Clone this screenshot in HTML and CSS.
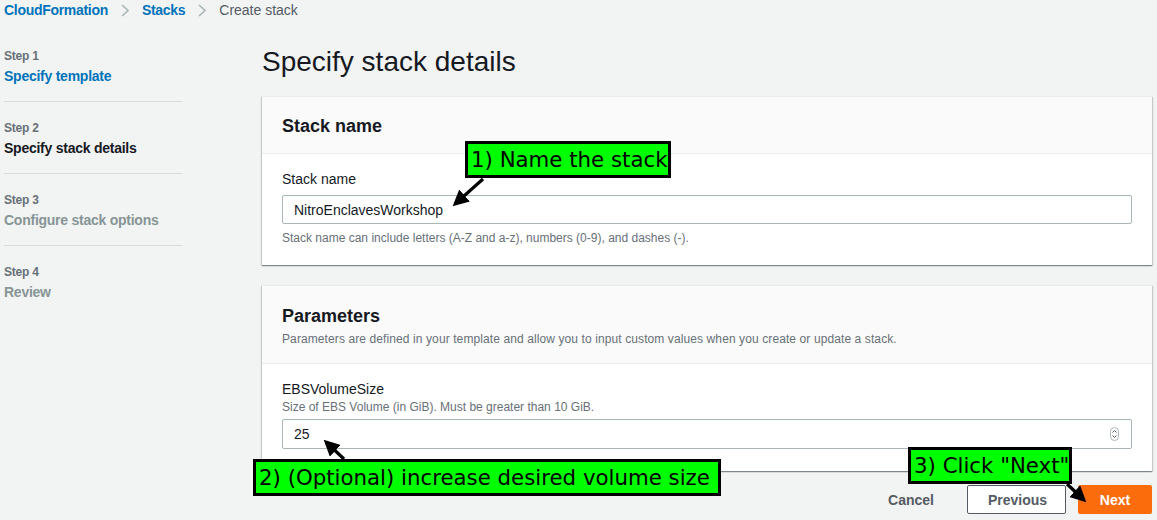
FILE: index.html
```html
<!DOCTYPE html>
<html lang="en">
<head>
<meta charset="utf-8">
<title>Create stack</title>
<link rel="stylesheet" href="styles.css">
</head>
<body>
<nav class="breadcrumb">
  <a class="crumb-link">CloudFormation</a>
  <svg class="crumb-sep" width="8" height="13" viewBox="0 0 8 13"><polyline points="1,1 7,6.5 1,12" fill="none" stroke="#aab7b8" stroke-width="1.6"/></svg>
  <a class="crumb-link">Stacks</a>
  <svg class="crumb-sep" width="8" height="13" viewBox="0 0 8 13"><polyline points="1,1 7,6.5 1,12" fill="none" stroke="#aab7b8" stroke-width="1.6"/></svg>
  <span class="crumb-current">Create stack</span>
</nav>

<div class="layout">
  <aside class="steps">
    <div class="step">
      <div class="step-num">Step 1</div>
      <a class="step-title step-link">Specify template</a>
    </div>
    <div class="step">
      <div class="step-num">Step 2</div>
      <div class="step-title step-active">Specify stack details</div>
    </div>
    <div class="step">
      <div class="step-num">Step 3</div>
      <div class="step-title step-disabled">Configure stack options</div>
    </div>
    <div class="step step-last">
      <div class="step-num">Step 4</div>
      <div class="step-title step-disabled">Review</div>
    </div>
  </aside>

  <main class="content">
    <h1 class="page-title">Specify stack details</h1>

    <section class="card">
      <header class="card-header">
        <h2 class="card-title">Stack name</h2>
      </header>
      <div class="card-body card-body-1">
        <label class="field-label">Stack name</label>
        <div class="input input-1">NitroEnclavesWorkshop</div>
        <div class="hint">Stack name can include letters (A-Z and a-z), numbers (0-9), and dashes (-).</div>
      </div>
    </section>

    <section class="card card-2">
      <header class="card-header card-header-2">
        <h2 class="card-title">Parameters</h2>
        <div class="card-desc">Parameters are defined in your template and allow you to input custom values when you create or update a stack.</div>
      </header>
      <div class="card-body card-body-2">
        <label class="field-label">EBSVolumeSize</label>
        <div class="field-desc">Size of EBS Volume (in GiB). Must be greater than 10 GiB.</div>
        <div class="input input-2">
          <span>25</span>
          <svg class="spinner" width="9" height="14" viewBox="0 0 9 14">
            <rect x="0.5" y="0.5" width="8" height="13" rx="4" fill="#fff" stroke="#aab7b8"/>
            <polyline points="2.5,5.5 4.5,3.5 6.5,5.5" fill="none" stroke="#545b64" stroke-width="1"/>
            <polyline points="2.5,8.5 4.5,10.5 6.5,8.5" fill="none" stroke="#545b64" stroke-width="1"/>
          </svg>
        </div>
      </div>
    </section>

    <div class="actions">
      <button class="btn btn-link">Cancel</button>
      <button class="btn btn-normal">Previous</button>
      <button class="btn btn-primary">Next</button>
    </div>
  </main>
</div>

<div class="callout callout-1">1) Name the stack</div>
<div class="callout callout-2">2) (Optional) increase desired volume size</div>
<div class="callout callout-3">3) Click "Next"</div>

<svg class="arrows" width="1157" height="520" viewBox="0 0 1157 520">
  <defs>
    <marker id="head" markerWidth="5" markerHeight="5" refX="4" refY="2.5" orient="auto" markerUnits="strokeWidth">
      <polygon points="0,0 5,2.5 0,5" fill="#000"/>
    </marker>
  </defs>
  <line x1="483" y1="179" x2="455" y2="204" stroke="#000" stroke-width="3.2" marker-end="url(#head)"/>
  <line x1="344" y1="459" x2="326" y2="442" stroke="#000" stroke-width="3.2" marker-end="url(#head)"/>
  <line x1="1067" y1="484" x2="1084" y2="500" stroke="#000" stroke-width="3.2" marker-end="url(#head)"/>
</svg>
</body>
</html>
```

FILE: styles.css
```css
* {
  box-sizing: border-box;
}

html, body {
  margin: 0;
  padding: 0;
}

body {
  width: 1157px;
  height: 520px;
  overflow: hidden;
  position: relative;
  background: #f2f3f3;
  font-family: "Liberation Sans", Arial, sans-serif;
  color: #16191f;
}

/* Breadcrumb */
.breadcrumb {
  display: flex;
  align-items: center;
  height: 20px;
  padding-left: 4px;
  font-size: 14px;
  line-height: 20px;
}

.crumb-link {
  color: #0073bb;
  font-weight: 700;
  letter-spacing: -0.3px;
}

.crumb-sep {
  margin: 0 13px 0 13px;
}

.crumb-current {
  color: #545b64;
}

/* Layout */
.layout {
  display: grid;
  grid-template-columns: 178px 1fr;
  column-gap: 80px;
  padding: 10px 5px 0 4px;
}

/* Side steps */
.step {
  padding: 18px 0 15px;
  border-bottom: 1px solid #d5dbdb;
}

.step-last {
  border-bottom: none;
}

.step-num {
  font-size: 12px;
  line-height: 16px;
  color: #687078;
  font-weight: 700;
  letter-spacing: -0.2px;
}

.step-title {
  display: block;
  margin-top: 2px;
  font-size: 14px;
  line-height: 20px;
  font-weight: 700;
  letter-spacing: -0.25px;
}

.step-link {
  color: #0073bb;
}

.step-active {
  color: #16191f;
}

.step-disabled {
  color: #879596;
}

/* Content */
.page-title {
  margin: 14px 0 16px;
  font-size: 28px;
  line-height: 36px;
  font-weight: 400;
  color: #16191f;
}

.card {
  background: #fff;
  border-top: 1px solid #eaeded;
  box-shadow: 0 1px 1px 0 rgba(0, 28, 36, 0.3), 1px 1px 1px 0 rgba(0, 28, 36, 0.15), -1px 1px 1px 0 rgba(0, 28, 36, 0.15);
}

.card-2 {
  margin-top: 20px;
}

.card-header {
  background: #fafafa;
  border-bottom: 1px solid #eaeded;
  padding: 18px 20px 16px;
}

.card-header-2 {
  padding: 19px 20px 16px;
}

.card-title {
  margin: 0;
  font-size: 18px;
  line-height: 22px;
  font-weight: 700;
  color: #16191f;
}

.card-desc {
  margin-top: 4px;
  font-size: 12px;
  line-height: 16px;
  color: #687078;
  letter-spacing: 0.1px;
}

.card-body {
  padding: 15px 20px 19px;
}

.card-body-2 {
  padding: 15px 20px 22px;
}

.field-label {
  display: block;
  font-size: 14px;
  line-height: 20px;
  color: #16191f;
}

.field-desc {
  font-size: 12px;
  line-height: 16px;
  color: #687078;
}

.input {
  display: flex;
  align-items: center;
  justify-content: space-between;
  border: 1px solid #aab7b8;
  border-radius: 2px;
  background: #fff;
  padding: 0 11px;
  font-size: 14px;
  color: #16191f;
}

.input-1 {
  height: 29px;
  margin-top: 6px;
}

.input-2 {
  height: 30px;
  margin-top: 4px;
  padding-right: 12px;
}

.hint {
  margin-top: 6px;
  font-size: 12px;
  line-height: 16px;
  color: #687078;
}

/* Actions */
.actions {
  display: flex;
  justify-content: flex-end;
  gap: 12px;
  margin-top: 14px;
}

.btn {
  height: 29px;
  font-family: "Liberation Sans", Arial, sans-serif;
  font-size: 14px;
  font-weight: 700;
  border-radius: 2px;
  padding: 0 20px;
  cursor: pointer;
}

.btn-link {
  background: transparent;
  border: 1px solid transparent;
  color: #545b64;
}

.btn-normal {
  width: 99px;
  background: #fff;
  border: 1px solid #545b64;
  color: #545b64;
}

.btn-primary {
  width: 74px;
  background: #fb6d0c;
  border: 1px solid #fb6d0c;
  color: #fff;
}

/* Annotation overlays */
.callout {
  position: absolute;
  height: 37px;
  border: 3px solid #000;
  background: #00ff00;
  font-family: "DejaVu Sans", sans-serif;
  font-size: 21.3px;
  line-height: 31px;
  color: #000;
  padding: 0 3px;
  white-space: nowrap;
}

.callout-1 {
  left: 465px;
  top: 141px;
  width: 206px;
}

.callout-2 {
  left: 253px;
  top: 459px;
  width: 468px;
}

.callout-3 {
  left: 908px;
  top: 447px;
  width: 164px;
}

.arrows {
  position: absolute;
  left: 0;
  top: 0;
  pointer-events: none;
}
```
